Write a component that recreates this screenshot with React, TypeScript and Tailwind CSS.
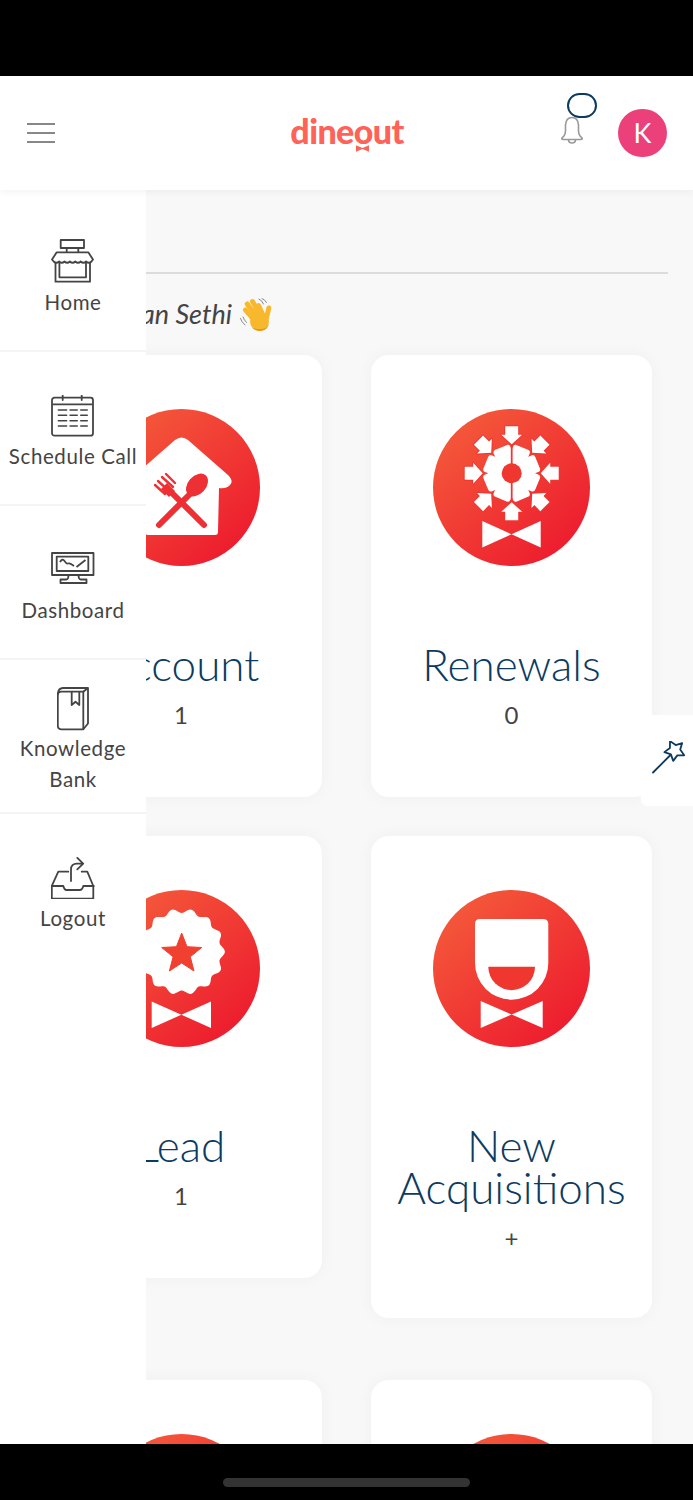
import React from "react";

const polar = (cx: number, cy: number, r: number, deg: number) => {
  const a = ((deg - 90) * Math.PI) / 180;
  return [cx + r * Math.cos(a), cy + r * Math.sin(a)];
};

// five pointed star, used by the lead badge and the wand
const starPoints = (cx: number, cy: number, R: number, r: number, rot = 0) =>
  Array.from({ length: 10 }, (_, i) => polar(cx, cy, i % 2 ? r : R, rot + i * 36).map((n) => n.toFixed(1)).join(",")).join(" ");

// wavy edge of the rosette on the lead card
const wavyRing = (cx: number, cy: number, R: number, amp: number, bumps: number) =>
  Array.from({ length: 180 }, (_, i) => {
    const deg = i * 2;
    const r = R + amp * Math.cos(((deg - 180 / bumps) * bumps * Math.PI) / 180);
    return polar(cx, cy, r, deg).map((n) => n.toFixed(1)).join(",");
  }).join(" ");

const Bow = ({ x1, x2, y1, y2 }: { x1: number; x2: number; y1: number; y2: number }) => {
  const mx = (x1 + x2) / 2;
  const my = (y1 + y2) / 2;
  return <polygon points={`${x1},${y1} ${mx},${my} ${x2},${y1} ${x2},${y2} ${mx},${my} ${x1},${y2}`} fill="#fff" />;
};

const Disc = ({ id, children }: { id: string; children: React.ReactNode }) => (
  <svg viewBox="0 0 157 157" className="w-[157px] h-[157px] shrink-0">
    <defs>
      <linearGradient id={id} x1="0.15" y1="0.1" x2="0.85" y2="0.9">
        <stop offset="0" stopColor="#f4583a" />
        <stop offset="1" stopColor="#ed1c2e" />
      </linearGradient>
    </defs>
    <circle cx="78.5" cy="78.5" r="78.5" fill={`url(#${id})`} />
    {children}
  </svg>
);

const AccountIcon = () => (
  <Disc id="g-account">
    <path
      d="M72 31 Q78.7 26 85 31 L125 66 Q131 72 127 76 Q123 80 116 79 L115 123 Q115 126 112 126 L45 126 Q42 126 42 123 L41 79 Q34 80 30 76 Q26 72 32 66 Z"
      fill="#fff"
    />
    <g stroke="#ee2f33" strokeLinecap="round" fill="none">
      <line x1="56" y1="116" x2="88" y2="84" strokeWidth="6" />
      <line x1="101" y1="116" x2="64" y2="79" strokeWidth="6" />
      <line x1="52" y1="76" x2="62" y2="85" strokeWidth="2.4" />
      <line x1="55" y1="72" x2="66" y2="82" strokeWidth="2.4" />
      <line x1="59" y1="68" x2="70" y2="78" strokeWidth="2.4" />
      <line x1="63" y1="65" x2="72" y2="74" strokeWidth="2.4" />
    </g>
    <ellipse cx="94" cy="76" rx="9" ry="13" transform="rotate(42 94 76)" fill="#ee2f33" />
    <path d="M58 80 L66 88 L72 82 L64 74 Z" fill="#ee2f33" />
  </Disc>
);

const RenewalsIcon = () => (
  <Disc id="g-renewals">
    <g transform="translate(78.7 64.3)">
      <circle r="23" fill="#fff" />
      {[0, 45, 90, 135, 180, 225, 270, 315].map((a) => (
        <rect key={a} x="-9" y="-28" width="18" height="10" rx="3" fill="#fff" transform={`rotate(${a + 22.5})`} />
      ))}
      <circle r="10" fill="#f0372f" />
      <line x1="0" y1="-29" x2="0" y2="-9" stroke="#f0372f" strokeWidth="1.8" />
      <line x1="0" y1="9" x2="0" y2="29" stroke="#f0372f" strokeWidth="1.8" />
      {[0, 45, 90, 135, 180, 225, 270, 315].map((a) => (
        <polygon
          key={a}
          transform={`rotate(${a})`}
          points="-6.5,-47 6.5,-47 6.5,-38.5 10.5,-38.5 0,-29 -10.5,-38.5 -6.5,-38.5"
          fill="#fff"
          stroke="#f0372f"
          strokeWidth="2"
          paintOrder="stroke"
          strokeLinejoin="round"
        />
      ))}
    </g>
    <Bow x1={49.3} x2={107.7} y1={112} y2={138.5} />
  </Disc>
);

const LeadIcon = () => (
  <Disc id="g-lead">
    <polygon points={wavyRing(78.7, 61.7, 41, 2.2, 14)} fill="#fff" />
    <polygon points={starPoints(78.7, 64, 21, 9)} fill="#f0402f" stroke="#f0402f" strokeLinejoin="round" />
    <Bow x1={48.7} x2={108} y1={111.5} y2={138} />
  </Disc>
);

const AcquisitionIcon = () => (
  <Disc id="g-acq">
    <path d="M42 34 Q42 29 47 29 L110 29 Q115.3 29 115.3 34 L115.3 73 A36.65 36.65 0 0 1 42 73 Z" fill="#fff" />
    <path d="M55.3 76.8 L102 76.8 A23.35 23.35 0 0 1 55.3 76.8 Z" fill="#f0372f" />
    <Bow x1={47.7} x2={109.7} y1={111} y2={138} />
  </Disc>
);

const iconCls = "fill-none stroke-[#444] stroke-[1.8]";

const HomeIcon = () => (
  <svg viewBox="0 0 44 46" className={`w-[44px] h-[46px] ${iconCls}`} strokeLinejoin="round">
    <rect x="9.7" y="2" width="23.3" height="8" />
    <path d="M15.7 10v4.3M27.3 10v4.3" />
    <path d="M5.7 14.3H37.3L42 21.5L40.5 23.5q-2.7 2.5-5.4 0q-2.7 2.5-5.4 0q-2.7 2.5-5.4 0q-2.7 2.5-5.4 0q-2.7 2.5-5.4 0q-2.7 2.5-5.4 0q-2.7 2.5-5.4 0L1 21.5Z" />
    <path d="M4.5 25v18.7h34.5V25M8.4 25v14.3h26.6V25" />
  </svg>
);

const CalendarIcon = () => (
  <svg viewBox="0 0 44 42" className={`w-[44px] h-[42px] ${iconCls}`} strokeLinecap="round">
    <rect x="1" y="2.7" width="41" height="38" rx="2.5" />
    <path d="M11.7 0.5v4.5M30.7 0.5v4.5M2 9.3h39" />
    <path
      strokeWidth="1.4"
      d="M7.3 15h8.4M19 15h7.3M29.7 15h6.6M7.3 20.3h8.4M19 20.3h7.3M29.7 20.3h6.6M7.3 25.7h8.4M19 25.7h7.3M29.7 25.7h6.6M7.3 31h8.4M19 31h7.3M29.7 31h6.6"
    />
  </svg>
);

const MonitorIcon = () => (
  <svg viewBox="0 0 44 32" className={`w-[44px] h-[32px] ${iconCls}`} strokeLinejoin="round">
    <rect x="1" y="1" width="41.5" height="22" />
    <rect x="5.7" y="4.7" width="31.6" height="14.3" />
    <path d="M9 10q2.5-4 4.5-1t3.5 2.5t3 0.5t3 2M25.5 15l9-7" />
    <path d="M17.5 23q0 4-2 4.5h-6v3.5h26v-3.5h-6q-2-.5-2-4.5" />
  </svg>
);

const BookIcon = () => (
  <svg viewBox="0 0 32 44" className={`w-[32px] h-[44px] ${iconCls}`} strokeLinejoin="round">
    <path d="M26.3 4.7H4.5Q.8 4.7.8 8v30.5Q.8 42.3 4.5 42.3h21.8z" />
    <path d="M.8 8Q1 1 6 1h25v35.5l-4.7 5.8M26.3 4.7L31 1" />
    <path d="M14.7 4.7V18l3.8-3.2 3.8 3.2V4.7" />
  </svg>
);

const InboxOutIcon = () => (
  <svg viewBox="0 0 44 42" className={`w-[44px] h-[42px] ${iconCls}`} strokeLinejoin="round" strokeLinecap="round">
    <path d="M17.3 14.7H7.3L.8 29v12.7h41.5V29L36.3 14.7H30.7" />
    <path d="M.8 29h11.5q1 4 3 4h13.5q2.5 0 3.5-4h10.5" />
    <path d="M20 24V12.3Q20 6.7 26 6.7h5.7M26.3.8l5.9 5.9-5.9 5.6" />
  </svg>
);

const WaveHand = () => (
  <svg viewBox="0 0 34 34" className="w-[34px] h-[34px]">
    <g stroke="#f8b82e" strokeWidth="5" strokeLinecap="round" fill="none">
      <line x1="5.5" y1="12" x2="14" y2="22" />
      <line x1="7.2" y1="6" x2="16" y2="18" />
      <line x1="12.5" y1="3.5" x2="19.5" y2="16" />
      <line x1="18.5" y1="7.5" x2="22.5" y2="16" />
      <line x1="28.8" y1="10" x2="26.5" y2="20" />
    </g>
    <ellipse cx="19.5" cy="23.5" rx="9.5" ry="9.5" fill="#f8b82e" />
    <path d="M12 29.5q5 4.5 11 3q5-1.5 6-7q-2 5-7 5.5t-10-1.5" fill="#e8951a" />
    <path d="M0.5 20.5q1 3.5 4.5 6.5M3 19q1 3 3.5 5.5M19 1q3 1 4.5 5M22 .5q3 1 4.5 4" stroke="#8a8a8a" strokeWidth="1" fill="none" strokeLinecap="round" />
  </svg>
);

const StatCard = ({
  icon,
  title,
  value,
  width,
  height,
}: {
  icon: React.ReactNode;
  title: React.ReactNode;
  value?: string;
  width: string;
  height: string;
}) => (
  <div className={`${width} ${height} shrink-0 bg-white rounded-[18px] shadow-[0_0_18px_rgba(0,0,0,0.04)] flex flex-col items-center pt-[54px]`}>
    {icon}
    <div className="mt-[77px] text-[44px] leading-[42px] font-light text-[#0d3b5f] text-center">{title}</div>
    <div className="mt-[14px] text-[24px] leading-[32px] text-[#444] text-center">{value}</div>
  </div>
);

const navItems = [
  { label: ["Home"], icon: <HomeIcon />, box: "h-[162px] pt-[48px]", gap: "mt-[3px]" },
  { label: ["Schedule Call"], icon: <CalendarIcon />, box: "h-[154px] pt-[43px]", gap: "mt-[4px]" },
  { label: ["Dashboard"], icon: <MonitorIcon />, box: "h-[154px] pt-[46px]", gap: "mt-[11px]" },
  { label: ["Knowledge", "Bank"], icon: <BookIcon />, box: "h-[154px] pt-[27px]", gap: "mt-[2px]" },
  { label: ["Logout"], icon: <InboxOutIcon />, box: "pt-[43px]", gap: "mt-[4px]" },
];

export default function App() {
  return (
    <div className="h-[1500px] w-[693px] bg-black flex flex-col overflow-hidden font-['Lato',sans-serif]">
      <div className="h-[76px] shrink-0 bg-black" />

      {/* Header */}
      <header className="h-[114px] shrink-0 bg-white relative z-20 shadow-[0_2px_8px_rgba(0,0,0,0.05)] flex items-center justify-between pl-[27px] pr-[26px]">
        <div className="w-[200px] flex flex-col gap-[7px]">
          <span className="block w-[28px] h-[2px] bg-[#888]" />
          <span className="block w-[28px] h-[2px] bg-[#888]" />
          <span className="block w-[28px] h-[2px] bg-[#888]" />
        </div>
        <div className="relative mt-[-5px]">
          <span className="text-[34px] leading-[40px] font-black tracking-[-0.6px] text-[#ff6257]">dineout</span>
          <svg viewBox="0 0 14 7" className="absolute left-[66px] top-[34px] w-[13px] h-[7px]">
            <polygon points="0,0 7,3 14,0 14,7 7,4 0,7" fill="#ff6257" />
          </svg>
        </div>
        <div className="w-[200px] flex items-center justify-end gap-[34px]">
          <div className="relative">
            <svg viewBox="0 0 24 28" className="w-[24px] h-[28px] mt-[-7px] fill-none stroke-[#999] stroke-[1.6]">
              <path d="M12 1.5Q18 1.5 18.5 9v5.5q0 5 3.5 7.5q.8 1.5-1 1.5h-18q-1.8 0-1-1.5q3.5-2.5 3.5-7.5V9Q6 1.5 12 1.5Z" />
              <path d="M8.5 23.5q0 3.5 3.5 3.5t3.5-3.5" />
            </svg>
            <span className="absolute left-[7px] top-[-30px] block w-[30px] h-[25px] rounded-[13px] border-2 border-[#0d3b5f]" />
          </div>
          <div className="w-[49px] h-[48px] rounded-full bg-[#ec407a] flex items-center justify-center text-white text-[27px]">K</div>
        </div>
      </header>

      {/* Page body */}
      <main className="flex-1 min-h-0 relative overflow-hidden bg-[#f8f8f8]">
        <div className="pl-[40px] pt-[82px]">
          <div className="h-[2px] w-[628px] bg-[#dcdcdc]" />
          <div className="h-[81px] flex items-center justify-start italic text-[27px] text-[#444]">
            <span className="w-[192px] text-right whitespace-nowrap">Karan Sethi</span>
            <span className="ml-[8px]"><WaveHand /></span>
          </div>
          <div className="flex gap-[49px] items-start mb-[39px]">
            <StatCard icon={<AccountIcon />} title="Account" value="1" width="w-[282px]" height="h-[442px]" />
            <StatCard icon={<RenewalsIcon />} title="Renewals" value="0" width="w-[281px]" height="h-[442px]" />
          </div>
          <div className="flex gap-[49px] items-start mb-[62px]">
            <StatCard icon={<LeadIcon />} title="Lead" value="1" width="w-[282px]" height="h-[442px]" />
            <StatCard
              icon={<AcquisitionIcon />}
              title={<>New<br />Acquisitions</>}
              value="+"
              width="w-[281px]"
              height="h-[482px]"
            />
          </div>
          <div className="flex gap-[49px] items-start">
            <StatCard icon={<Disc id="g-a"><g /></Disc>} title="" width="w-[282px]" height="h-[442px]" />
            <StatCard icon={<Disc id="g-b"><g /></Disc>} title="" width="w-[281px]" height="h-[442px]" />
          </div>
        </div>

        {/* Slide-in menu */}
        <nav className="absolute left-0 top-0 bottom-0 w-[146px] bg-white z-10">
          {navItems.map((item) => (
            <div key={item.label[0]} className={`${item.box} flex flex-col items-center border-b-2 border-[#f4f4f4] last:border-b-0`}>
              {item.icon}
              <div className={`${item.gap} text-[20.5px] leading-[31px] tracking-[0.6px] text-[#444] text-center whitespace-nowrap`}>
                {item.label.map((l) => (
                  <div key={l}>{l}</div>
                ))}
              </div>
            </div>
          ))}
        </nav>

        {/* Floating tool button */}
        <div className="absolute right-0 top-[525px] w-[52px] h-[91px] bg-white rounded-l-[6px] flex items-center justify-center z-10">
          <svg viewBox="0 0 40 40" className="w-[40px] h-[40px] fill-none stroke-[#0d3b5f] stroke-[1.8]" strokeLinejoin="round" strokeLinecap="round">
            <line x1="6" y1="31.5" x2="23" y2="14.5" />
            <polygon points={starPoints(27.8, 9.5, 10.5, 5.5, -27)} />
          </svg>
        </div>
      </main>

      {/* Android nav bar */}
      <div className="h-[56px] shrink-0 bg-black flex justify-center pt-[34px]">
        <div className="w-[247px] h-[9px] rounded-full bg-[#333]" />
      </div>
    </div>
  );
}
